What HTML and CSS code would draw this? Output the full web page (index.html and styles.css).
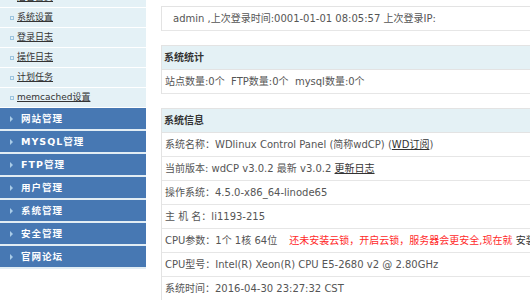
FILE: index.html
```html
<!DOCTYPE html>
<html lang="zh-CN">
<head>
  <meta charset="UTF-8" />
  <title>wdCP 管理面板</title>
  <link rel="stylesheet" href="styles.css">
</head>
<body>
  <div class="page">
    <!-- 左侧菜单 -->
    <div class="sidebar">
      <ul class="submenu">
        <li><a href="#">后台首页</a></li>
        <li><a href="#">系统设置</a></li>
        <li><a href="#">登录日志</a></li>
        <li><a href="#">操作日志</a></li>
        <li><a href="#">计划任务</a></li>
        <li><a href="#">memcached设置</a></li>
      </ul>
      <ul class="menu">
        <li>网站管理</li>
        <li>MYSQL管理</li>
        <li>FTP管理</li>
        <li>用户管理</li>
        <li>系统管理</li>
        <li>安全管理</li>
        <li>官网论坛</li>
      </ul>
    </div>

    <!-- 右侧内容 -->
    <div class="main">
      <div class="box">
        <div class="row welcome">admin ,上次登录时间:0001-01-01 08:05:57 上次登录IP:</div>
      </div>

      <div class="box">
        <div class="box-title">系统统计</div>
        <div class="row">站点数量:0个&nbsp; FTP数量:0个&nbsp; mysql数量:0个</div>
      </div>

      <div class="box">
        <div class="box-title">系统信息</div>
        <div class="row">系统名称：WDlinux Control Panel (简称wdCP) (<a href="#">WD订阅</a>)</div>
        <div class="row">当前版本: wdCP v3.0.2 最新 v3.0.2 <a href="#">更新日志</a></div>
        <div class="row">操作系统：4.5.0-x86_64-linode65</div>
        <div class="row">主 机 名：li1193-215</div>
        <div class="row">CPU参数：1个 1核 64位 <span class="warn">还未安装云锁，开启云锁，服务器会更安全,现在就</span> <a href="#" class="plain">安装</a></div>
        <div class="row">CPU型号：Intel(R) Xeon(R) CPU E5-2680 v2 @ 2.80GHz</div>
        <div class="row">系统时间：2016-04-30 23:27:32 CST</div>
      </div>
    </div>
  </div>
</body>
</html>
```

FILE: styles.css
```css
body {
  margin: 0;
  background: #fff;
  font-family: 'DejaVu Sans', 'Noto Sans CJK SC', sans-serif;
  font-size: 10px;
  color: #555;
  overflow: hidden;
}

ul {
  list-style: none;
  margin: 0;
  padding: 0;
}

a {
  color: #333;
}

.page {
  display: flex;
  align-items: flex-start;
}

.sidebar {
  width: 146px;
  flex-shrink: 0;
}

.submenu {
  background: #e4f1f6;
  margin-top: -12px;
}

.submenu li {
  height: 19px;
  line-height: 19px;
  border-bottom: 1px solid #fff;
  padding-left: 10px;
  display: flex;
  align-items: center;
  gap: 3px;
  font-size: 9px;
}

.submenu li::before {
  content: '';
  width: 2px;
  height: 2px;
  border: 1px solid #9cc4de;
}

.menu li {
  height: 21px;
  line-height: 21px;
  background: #4778b3;
  border-bottom: 2px solid #e2edf4;
  color: #fff;
  font-weight: bold;
  font-size: 9.5px;
  letter-spacing: 1px;
  padding-left: 10px;
  display: flex;
  align-items: center;
  gap: 8px;
}

.menu li::before {
  content: '';
  border-left: 3px solid #a9cce8;
  border-top: 3px solid transparent;
  border-bottom: 3px solid transparent;
}

.main {
  width: 420px;
  flex-shrink: 0;
  margin-left: 15px;
  padding-top: 6px;
}

.box {
  border: 1px solid #e3e3e3;
  border-bottom: none;
  margin-bottom: 14px;
}

.box-title {
  height: 23px;
  line-height: 23px;
  background: #e4f1f5;
  border-bottom: 1px solid #e3e3e3;
  padding-left: 2px;
  color: #333;
  font-weight: bold;
}

.row {
  height: 23px;
  line-height: 23px;
  border-bottom: 1px solid #e6e6e6;
  padding-left: 3px;
  white-space: nowrap;
}

.welcome {
  padding-left: 11px;
}

.warn {
  color: #ff2a2a;
  margin-left: 9px;
}

.plain {
  text-decoration: none;
}
```
